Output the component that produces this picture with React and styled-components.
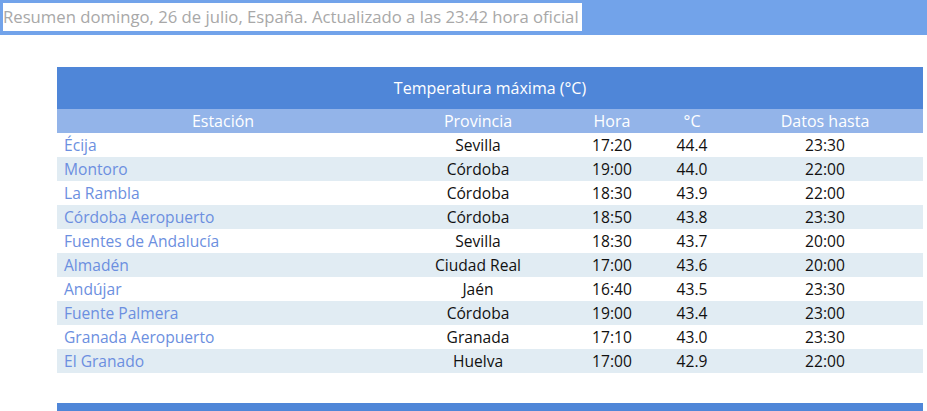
import React from "react";
import styled, { createGlobalStyle } from "styled-components";

const GlobalStyle = createGlobalStyle`
  body {
    margin: 0;
    background: #fff;
    font-family: "Open Sans", "Liberation Sans", sans-serif;
  }
`;

const TopBar = styled.div`
  background: #72a3ea;
  height: 35px;
  padding: 3px;
  box-sizing: border-box;
`;

const Summary = styled.span`
  display: inline-block;
  background: #fff;
  color: #a8a8a8;
  font-size: 16.7px;
  line-height: 28px;
  height: 28px;
  padding-right: 3px;
  white-space: nowrap;
`;

const Content = styled.div`
  padding: 32px 4px 0 57px;
`;

const Table = styled.table`
  width: 866px;
  border-collapse: collapse;
  table-layout: fixed;
  font-size: 16px;
`;

const Caption = styled.th`
  background: #4f86d8;
  color: #fff;
  font-weight: 400;
  height: 42px;
  padding: 0;
`;

const HeadCell = styled.th`
  background: #93b4e9;
  color: #fff;
  font-weight: 400;
  height: 24px;
  padding: 0;
`;

const Row = styled.tr`
  background: ${({ $striped }) => ($striped ? "#e1ecf3" : "#fff")};
`;

const Cell = styled.td`
  height: 24px;
  font-size: 15.6px;
  padding: ${({ $left }) => ($left ? "0 0 0 7px" : "0")};
  text-align: ${({ $left }) => ($left ? "left" : "center")};
  color: ${({ $link }) => ($link ? "#6c8fe0" : "#111")};
  white-space: nowrap;
`;

const Footer = styled.div`
  margin: 30px 4px 0 57px;
  width: 866px;
  height: 8px;
  background: #4f86d8;
`;

const rows = [
  ["Écija", "Sevilla", "17:20", "44.4", "23:30"],
  ["Montoro", "Córdoba", "19:00", "44.0", "22:00"],
  ["La Rambla", "Córdoba", "18:30", "43.9", "22:00"],
  ["Córdoba Aeropuerto", "Córdoba", "18:50", "43.8", "23:30"],
  ["Fuentes de Andalucía", "Sevilla", "18:30", "43.7", "20:00"],
  ["Almadén", "Ciudad Real", "17:00", "43.6", "20:00"],
  ["Andújar", "Jaén", "16:40", "43.5", "23:30"],
  ["Fuente Palmera", "Córdoba", "19:00", "43.4", "23:00"],
  ["Granada Aeropuerto", "Granada", "17:10", "43.0", "23:30"],
  ["El Granado", "Huelva", "17:00", "42.9", "22:00"],
];

export default function App() {
  return (
    <>
      <GlobalStyle />
      <TopBar>
        <Summary>Resumen domingo, 26 de julio, España. Actualizado a las 23:42 hora oficial</Summary>
      </TopBar>
      <Content>
        <Table>
          <colgroup>
            <col style={{ width: 332 }} />
            <col style={{ width: 178 }} />
            <col style={{ width: 90 }} />
            <col style={{ width: 70 }} />
            <col style={{ width: 196 }} />
          </colgroup>
          <thead>
            <tr>
              <Caption colSpan={5}>Temperatura máxima (°C)</Caption>
            </tr>
            <tr>
              <HeadCell>Estación</HeadCell>
              <HeadCell>Provincia</HeadCell>
              <HeadCell>Hora</HeadCell>
              <HeadCell>°C</HeadCell>
              <HeadCell>Datos hasta</HeadCell>
            </tr>
          </thead>
          <tbody>
            {rows.map((r, i) => (
              <Row key={r[0]} $striped={i % 2 === 1}>
                <Cell $left $link>{r[0]}</Cell>
                <Cell>{r[1]}</Cell>
                <Cell>{r[2]}</Cell>
                <Cell>{r[3]}</Cell>
                <Cell>{r[4]}</Cell>
              </Row>
            ))}
          </tbody>
        </Table>
      </Content>
      <Footer />
    </>
  );
}
